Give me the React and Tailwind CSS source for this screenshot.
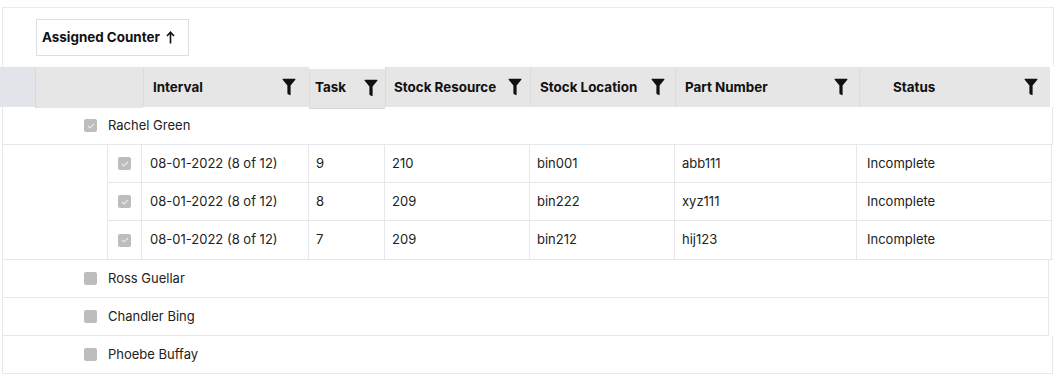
const FONT = { fontFamily: "Inter, 'Noto Sans', sans-serif" };

const headerCols = [
  { label: "Interval", w: "w-[166px]", pad: "pl-[9px] pr-[13px]" },
  { label: "Task", w: "w-[76px]", pad: "pl-[5px] pr-[7px]", shift: true },
  { label: "Stock Resource", w: "w-[145px]", pad: "pl-[8px] pr-[8px]" },
  { label: "Stock Location", w: "w-[145px]", pad: "pl-[9px] pr-[10px]" },
  { label: "Part Number", w: "w-[184px]", pad: "pl-[9px] pr-[11px]" },
  { label: "Status", w: "w-[191px]", pad: "pl-[33px] pr-[12px]" },
];

const childRows = [
  ["08-01-2022 (8 of 12)", "9", "210", "bin001", "abb111", "Incomplete"],
  ["08-01-2022 (8 of 12)", "8", "209", "bin222", "xyz111", "Incomplete"],
  ["08-01-2022 (8 of 12)", "7", "209", "bin212", "hij123", "Incomplete"],
];

const childWidths = [
  "w-[167px]",
  "w-[76px]",
  "w-[145px]",
  "w-[145px]",
  "w-[182px]",
  "w-[195px]",
];

const FilterIcon = () => (
  <svg width="14" height="18" viewBox="0 0 14 18" className="shrink-0">
    <path
      d="M0.5 1.5 Q0.5 0.8 1.2 0.8 H12.8 Q13.5 0.8 13.5 1.5 L8.6 7.6 V16.6 Q8.6 17.4 7.8 17.1 L6 16.3 Q5.4 16 5.4 15.3 V7.6 Z"
      fill="#111"
    />
  </svg>
);

const Check = ({ checked }) => (
  <span className="flex h-[13px] w-[13px] items-center justify-center rounded-[2px] bg-[#bdbdbd]">
    {checked && (
      <svg width="8" height="6" viewBox="0 0 8 6">
        <path d="M1 3 L3 5 L7 1" stroke="#e6e6e6" strokeWidth="1.2" fill="none" />
      </svg>
    )}
  </span>
);

const GroupRow = ({ name, checked, extra = "" }) => (
  <div
    className={`flex h-[38px] items-center border-b border-l border-r border-[#e6e8ec] pl-[81px] ${extra}`}
  >
    <Check checked={checked} />
    <span className="ml-[11px] text-[13px] text-[#222]">{name}</span>
  </div>
);

export default function App() {
  return (
    <div className="h-[381px] w-[1062px] bg-white pt-[7px]" style={FONT}>
      {/* group-by panel */}
      <div className="ml-[2px] h-[60px] w-[1052px] border-l border-r border-t border-[#ebebeb] pl-[33px] pt-[11px]">
        <div className="flex h-[37px] w-[153px] items-center gap-[6px] border border-[#dedede] pl-[5px] text-[13.4px] font-bold text-[#111]">
          Assigned Counter
          <svg width="9" height="13" viewBox="0 0 9 13">
            <path d="M4.5 12.5 V1.5 M1 5 L4.5 1.2 L8 5" stroke="#111" strokeWidth="1.6" fill="none" />
          </svg>
        </div>
      </div>

      {/* column header */}
      <div className="flex h-[40px] w-[1050px]">
        <div className="w-[35px] bg-[#e1e5ea]" />
        <div className="h-[41px] w-[108px] border-l border-[#dadada] bg-[#e6e6e6]" />
        {headerCols.map((c) => (
          <div
            key={c.label}
            className={`flex items-center justify-between border-l border-[#dcdcdc] bg-[#e6e6e6] text-[13.4px] font-bold text-[#111] ${c.w} ${c.pad} ${
              c.shift ? "mt-[2px] h-[40px] border-b border-b-[#d6d6d6]" : "h-[40px]"
            }`}
          >
            <span className={c.shift ? "-mt-[2px]" : ""}>{c.label}</span>
            <span className={c.shift ? "-mt-[2px]" : ""}>
              <FilterIcon />
            </span>
          </div>
        ))}
      </div>

      <div className="ml-[2px] w-[1051px]">
        <GroupRow name="Rachel Green" checked />

        {/* detail rows */}
        <div className="flex border-b border-[#e6e8ec]">
          <div className="w-[106px] border-l border-r border-[#e6e8ec]" />
          <div className="flex flex-col">
            {childRows.map((r, i) => (
              <div
                key={i}
                className={`flex h-[38px] ${i < 2 ? "border-b border-[#e6e8ec]" : ""}`}
              >
                <div className="flex w-[34px] items-center justify-center border-r border-[#e6e8ec]">
                  <Check checked />
                </div>
                {r.map((v, j) => (
                  <div
                    key={j}
                    className={`flex items-center border-r border-[#e6e8ec] text-[13px] text-[#222] ${childWidths[j]} ${
                      j === 0 ? "pl-[8px]" : j === 5 ? "pl-[10px]" : "pl-[7px]"
                    }`}
                  >
                    {v}
                  </div>
                ))}
              </div>
            ))}
          </div>
        </div>

        <GroupRow name="Ross Guellar" extra="mr-[4px]" />
        <GroupRow name="Chandler Bing" extra="mr-[4px]" />
        <GroupRow name="Phoebe Buffay" />
      </div>
    </div>
  );
}
